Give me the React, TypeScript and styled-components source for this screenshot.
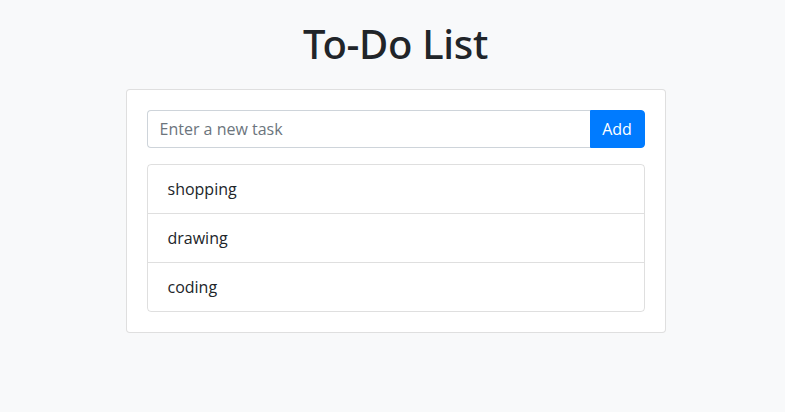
import React, { useState } from "react";
import styled, { createGlobalStyle } from "styled-components";

const Global = createGlobalStyle`
  * { box-sizing: border-box; }
  html, body { margin: 0; padding: 0; }
  body {
    background: #f8f9fa;
    color: #212529;
    font-family: "Open Sans", "Noto Sans", sans-serif;
    font-size: 16px;
    line-height: 1.5;
  }
`;

const Page = styled.div`
  display: flex;
  flex-direction: column;
  align-items: center;
  padding: 20px 0 0 6px;
`;

const Title = styled.h1`
  margin: 0 0 21px;
  font-family: "Noto Sans", "Open Sans", sans-serif;
  font-size: 40px;
  line-height: 48px;
  font-weight: 500;
  letter-spacing: -0.3px;
  color: #212529;
`;

const Card = styled.div`
  width: 540px;
  background: #fff;
  border: 1px solid rgba(0, 0, 0, 0.125);
  border-radius: 4px;
  padding: 20px;
`;

const InputGroup = styled.form`
  display: flex;
  margin-bottom: 16px;
`;

const Input = styled.input`
  flex: 1;
  min-width: 0;
  height: 38px;
  padding: 6px 12px;
  font: inherit;
  color: #495057;
  background: #fff;
  border: 1px solid #ced4da;
  border-right: none;
  border-radius: 4px 0 0 4px;
  outline: none;
  &::placeholder { color: #6c757d; }
`;

const Button = styled.button`
  height: 38px;
  width: 55px;
  font: inherit;
  color: #fff;
  background: #007bff;
  border: 1px solid #007bff;
  border-radius: 0 4px 4px 0;
  cursor: pointer;
`;

const List = styled.ul`
  list-style: none;
  margin: 0;
  padding: 0;
  border: 1px solid rgba(0, 0, 0, 0.125);
  border-radius: 4px;
`;

const Item = styled.li`
  padding: 12px 20px;
  line-height: 24px;
  & + & { border-top: 1px solid rgba(0, 0, 0, 0.125); }
`;

export default function App() {
  const [tasks, setTasks] = useState(["shopping", "drawing", "coding"]);
  const [value, setValue] = useState("");
  return (
    <>
      <Global />
      <Page>
        <Title>To-Do List</Title>
        <Card>
          <InputGroup
            onSubmit={(e) => {
              e.preventDefault();
              if (value.trim()) {
                setTasks([...tasks, value.trim()]);
                setValue("");
              }
            }}
          >
            <Input
              placeholder="Enter a new task"
              value={value}
              onChange={(e) => setValue(e.target.value)}
            />
            <Button type="submit">Add</Button>
          </InputGroup>
          <List>
            {tasks.map((t, i) => (
              <Item key={i}>{t}</Item>
            ))}
          </List>
        </Card>
      </Page>
    </>
  );
}
